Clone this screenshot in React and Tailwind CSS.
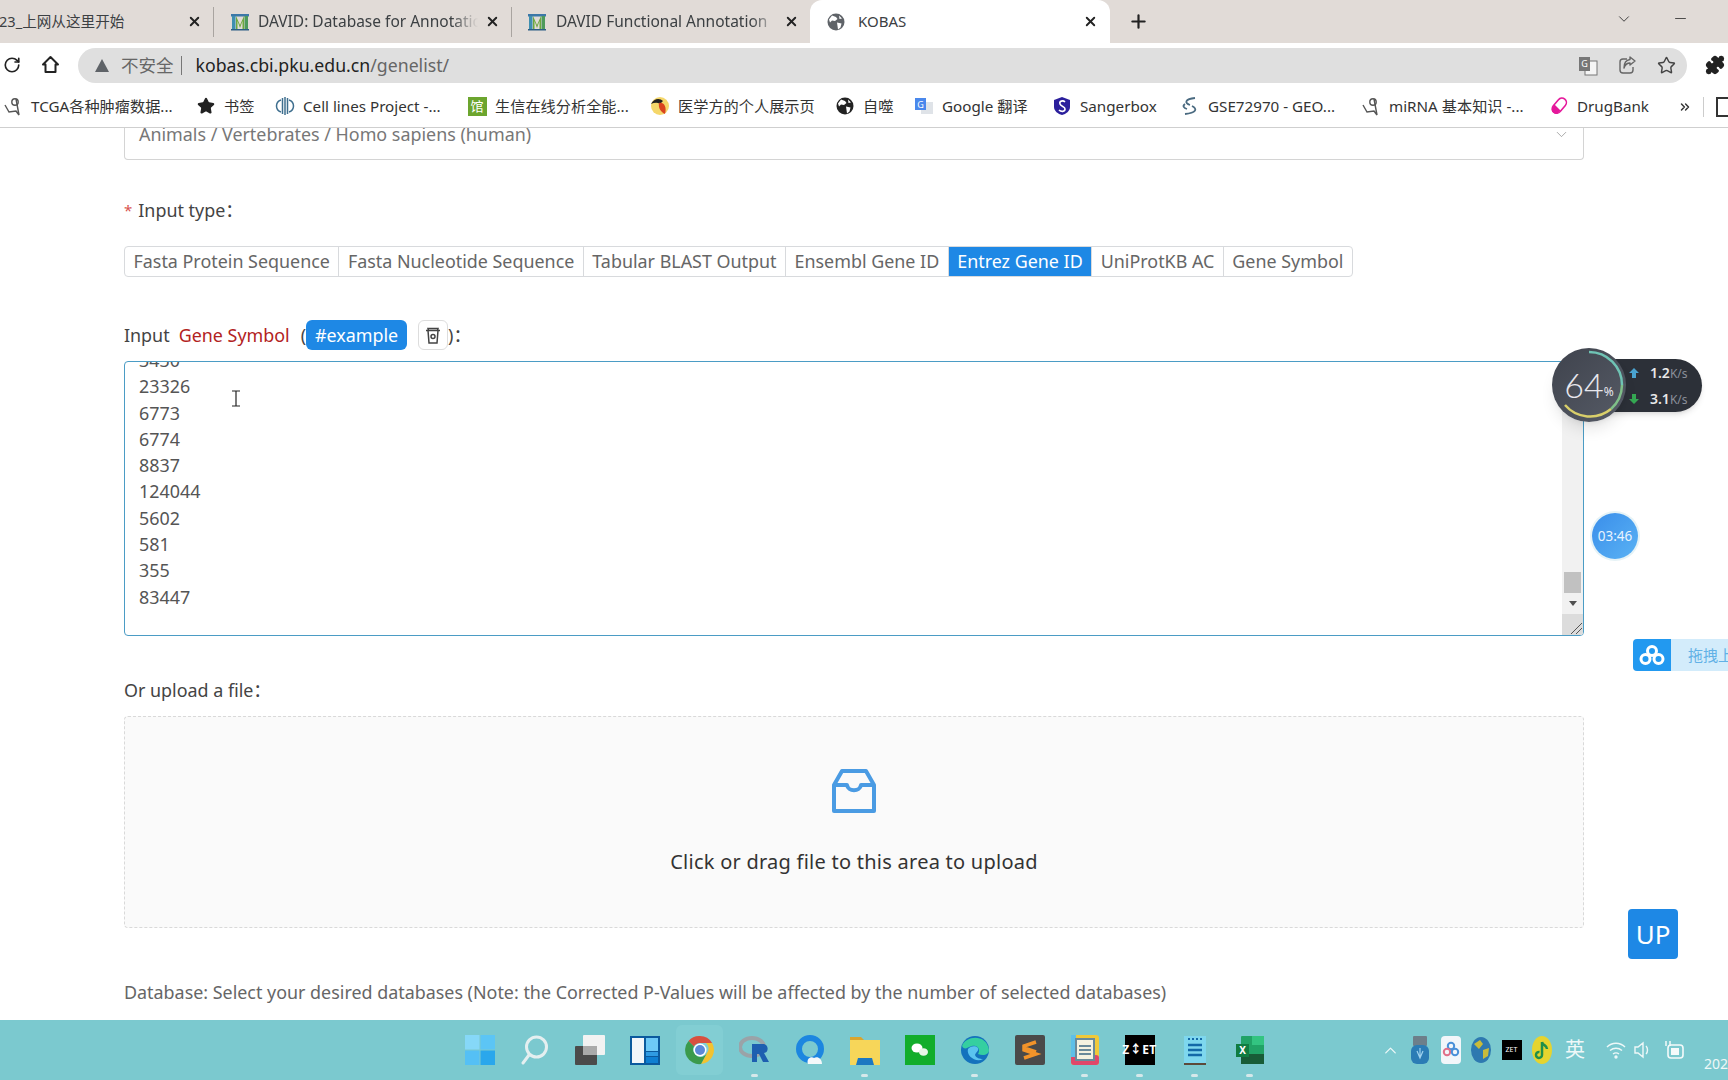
import { RotateCw, Star, Plus, X, ChevronDown, Minus, ChevronUp, Puzzle, ChevronsRight } from "lucide-react";

const uiFont = { fontFamily: '"Noto Sans", "Noto Sans CJK SC", sans-serif' };

const DavidIcon = () => (
    <svg width="20" height="20" viewBox="0 0 20 20" className="shrink-0">
        <rect x="1" y="2" width="18" height="2.5" fill="#3c78a8" />
        <rect x="2" y="4" width="3.5" height="13" fill="#3f8fb0" />
        <rect x="14.5" y="4" width="3.5" height="13" fill="#4d9a5c" />
        <path d="M6 4l4 9 4-9v13h-1.5V9L10 16 7.5 9v8H6z" fill="#6da83f" />
        <rect x="1" y="17" width="18" height="1.5" fill="#2c5f85" />
    </svg>
);

const GlobeIcon = ({ size = 18, color = "#5f6368" }) => (
    <svg width={size} height={size} viewBox="0 0 18 18" className="shrink-0">
        <circle cx="9" cy="9" r="8.5" fill={color} />
        <path d="M5 2.5l4 1.5 1.5 2-2.5 2-3-.5-2 2-1-3zM10 9.5l4.5 1-1 4-2.500 2-.5-3.500zM12 2.500l3 3-2.500.5z" fill="#fff" />
    </svg>
);

const SmallFolded = () => (
    <svg width="20" height="20" viewBox="0 0 20 20" fill="none" stroke="#555" strokeWidth="1.4">
        <path d="M2 9l4 7 7-1 3 4-3-16" />
        <circle cx="12" cy="6" r="3.200" />
    </svg>
);

const Bookmark = ({ w, icon, label }) => (
    <div className={"flex items-center gap-[8px] shrink-0 " + w}>
        <span className="w-[20px] h-[20px] flex items-center justify-center shrink-0">{icon}</span>
        <span className="text-[15.200px] text-[#333] whitespace-nowrap">{label}</span>
    </div>
);

const bookmarks = [
    { w: "w-[193px]", label: "TCGA各种肿瘤数据...", icon: <SmallFolded /> },
    { w: "w-[79px]", label: "书签", icon: <Star size={18} fill="#222" stroke="#222" /> },
    {
        w: "w-[192px]",
        label: "Cell lines Project -...",
        icon: (
            <svg width="20" height="20" viewBox="0 0 20 20" fill="none" stroke="#3f6f8f" strokeWidth="1.5">
                <path d="M6 4c-6 2-6 10 0 12M14 4c6 2 6 10 0 12" />
                <path d="M7.500 2v16M10 1v18M12.500 2v16" />
            </svg>
        ),
    },
    {
        w: "w-[183px]",
        label: "生信在线分析全能...",
        icon: (
            <span className="w-[19px] h-[19px] bg-[#6ca52e] text-white text-[13px] leading-[19px] text-center">馆</span>
        ),
    },
    {
        w: "w-[185px]",
        label: "医学方的个人展示页",
        icon: (
            <svg width="20" height="20" viewBox="0 0 20 20">
                <circle cx="10" cy="10" r="9" fill="#f5d76a" />
                <path d="M1 8c3-6 9-6 12-3l-3 3C7 6 4 7 1 8z" fill="#222" />
                <path d="M9 7c5-1 8 4 6 11-4-2-7-6-6-11z" fill="#d9431e" />
            </svg>
        ),
    },
    { w: "w-[79px]", label: "自噬", icon: <GlobeIcon size={18} color="#222" /> },
    {
        w: "w-[138px]",
        label: "Google 翻译",
        icon: (
            <svg width="20" height="20" viewBox="0 0 20 20">
                <rect x="7" y="6" width="12" height="12" fill="#dfe3e8" />
                <rect x="1" y="2" width="11" height="12" fill="#4a88ec" />
                <text x="6.500" y="11.500" fontSize="9" fill="#fff" textAnchor="middle">G</text>
            </svg>
        ),
    },
    {
        w: "w-[128px]",
        label: "Sangerbox",
        icon: (
            <svg width="20" height="20" viewBox="0 0 20 20">
                <path d="M10 1l8 3v7c0 4-4 7-8 8-4-1-8-4-8-8V4z" fill="#2b1f9c" />
                <path d="M13 6c-2-2-6-1-5 2s5 2 5 5-4 3-6 1" fill="none" stroke="#fff" strokeWidth="1.600" />
            </svg>
        ),
    },
    {
        w: "w-[181px]",
        label: "GSE72970 - GEO...",
        icon: (
            <svg width="20" height="20" viewBox="0 0 20 20" fill="none" stroke="#4a6a80" strokeWidth="1.800">
                <path d="M15 2C5 3 4 7 10 9" />
                <path d="M12 10c6 3 4 7-7 8" />
                <path d="M5 8c-3 2-1 4 2 5" />
            </svg>
        ),
    },
    { w: "w-[188px]", label: "miRNA 基本知识 -...", icon: <SmallFolded /> },
    {
        w: "w-[129px]",
        label: "DrugBank",
        icon: (
            <svg width="20" height="20" viewBox="0 0 20 20">
                <rect x="2" y="5.500" width="17" height="9" rx="4.500" transform="rotate(-50 10 10)" fill="#fff" stroke="#e5189b" strokeWidth="1.600" />
                <path d="M5.500 8.500l6 6-3 3c-3 1.500-7-2-5.500-5.500z" fill="#e5189b" />
            </svg>
        ),
    },
];

const Tab = ({ w, children, sep = true }) => (
    <div className={"flex items-center shrink-0 h-[30px] " + w + (sep ? " border-r border-[#a9a4a0]" : "")}>
        {children}
        <X size={15} strokeWidth={3} className="text-[#222] ml-auto mr-[11px] shrink-0" />
    </div>
);

const fadeText = "text-[15.500px] text-[#3c4043] whitespace-nowrap overflow-hidden [mask-image:linear-gradient(to_right,black_88%,transparent)]";

const types = ["Fasta Protein Sequence", "Fasta Nucleotide Sequence", "Tabular BLAST Output", "Ensembl Gene ID", "Entrez Gene ID", "UniProtKB AC", "Gene Symbol"];

const lines = ["3430", "23326", "6773", "6774", "8837", "124044", "5602", "581", "355", "83447"];

const TaskIcon = ({ children, dot, active }) => (
    <div className="w-[55px] h-[60px] flex flex-col items-center justify-center relative shrink-0">
        {active && <div className="absolute left-[4px] right-[4px] top-[5px] bottom-[5px] rounded-md bg-[#82ced3]" />}
        <div className="relative w-[32px] h-[32px] flex items-center justify-center">{children}</div>
        {dot && <div className="absolute bottom-[3px] w-[7px] h-[3px] rounded-sm bg-[#d5e8ea]" />}
    </div>
);

const taskIcons = [
    {
        node: (
            <svg width="30" height="30" viewBox="0 0 30 30">
                <rect x="0" y="0" width="14.500" height="14.500" fill="#86d8f8" />
                <rect x="15.500" y="0" width="14.500" height="14.500" fill="#5cc5f5" />
                <rect x="0" y="15.500" width="14.500" height="14.500" fill="#55c0f5" />
                <rect x="15.500" y="15.500" width="14.500" height="14.500" fill="#2aa7ec" />
            </svg>
        ),
    },
    {
        node: (
            <svg width="28" height="30" viewBox="0 0 28 30" fill="none" stroke="#e4eff0" strokeWidth="3">
                <circle cx="15.500" cy="12" r="10" />
                <path d="M8 20l-6 8" strokeLinecap="round" />
            </svg>
        ),
    },
    {
        node: (
            <svg width="30" height="30" viewBox="0 0 30 30">
                <rect x="0" y="11" width="22" height="19" rx="1" fill="#4b4b4b" />
                <rect x="8" y="0" width="22" height="20" rx="1" fill="#f2f2f2" />
                <rect x="8" y="11" width="14" height="9" fill="#aaa" />
            </svg>
        ),
    },
    {
        node: (
            <svg width="30" height="30" viewBox="0 0 30 30">
                <rect x="0" y="1" width="30" height="29" fill="#0b5a9e" />
                <rect x="2" y="3" width="12" height="25" fill="#f2f6fa" />
                <rect x="16" y="3" width="12" height="13" fill="#6dc9f7" />
                <rect x="16" y="17" width="12" height="4" fill="#2f9be3" />
                <rect x="16" y="22" width="12" height="6" fill="#0f7fd2" />
            </svg>
        ),
    },
    {
        active: true,
        node: (
            <svg width="30" height="30" viewBox="0 0 30 30">
                <path d="M15 1a14 14 0 0 1 12.100 7H15a7 7 0 0 0-6.100 3.500L3.500 6A14 14 0 0 1 15 1z" fill="#d8503f" />
                <path d="M27.100 8A14 14 0 0 1 16 29l6-11a7 7 0 0 0-1-10z" fill="#f2c230" />
                <path d="M3.500 6A14 14 0 0 0 16 29l6-11a7 7 0 0 1-13-6.500z" fill="#3b9a4c" />
                <circle cx="15" cy="15" r="6.500" fill="#fff" />
                <circle cx="15" cy="15" r="5" fill="#5b88d8" />
            </svg>
        ),
    },
    {
        dot: true,
        node: (
            <svg width="32" height="28" viewBox="0 0 32 28">
                <ellipse cx="13" cy="11" rx="12" ry="9" fill="none" stroke="#9aa3a8" strokeWidth="4" />
                <path d="M13 8h11c6 0 6 9 1 9l5 9h-6l-4-8h-2v8h-5z" fill="#1d5fb0" />
            </svg>
        ),
    },
    {
        node: (
            <svg width="30" height="30" viewBox="0 0 30 30">
                <circle cx="15" cy="14" r="11" fill="none" stroke="#1c86e0" strokeWidth="6" />
                <path d="M13 29c-2-5 3-8 6-6 3-2 8 0 8 6z" fill="#f4f8fa" />
            </svg>
        ),
    },
    {
        dot: true,
        node: (
            <svg width="32" height="30" viewBox="0 0 32 30">
                <path d="M1 2h11l3 3H1z" fill="#d9a52e" />
                <rect x="1" y="5" width="30" height="25" fill="#f7d659" />
                <path d="M7 30l2-7h14l2 7z" fill="#1d78c1" />
            </svg>
        ),
    },
    {
        node: (
            <svg width="30" height="30" viewBox="0 0 30 30">
                <rect width="30" height="30" fill="#12ad2b" />
                <ellipse cx="12" cy="13" rx="5.500" ry="4.500" fill="#fff" />
                <ellipse cx="18.500" cy="17" rx="4.500" ry="3.800" fill="#e8f5e6" />
            </svg>
        ),
    },
    {
        dot: true,
        node: (
            <svg width="30" height="30" viewBox="0 0 30 30">
                <circle cx="15" cy="15" r="14" fill="#1472bd" />
                <path d="M2 11C6 0 27 -1 29 15c0 5-6 6-11 4 3-5-1-9-6-8-5 1-7 5-10 0z" fill="#35cfa0" />
                <path d="M8 14c2-3 8-4 10-1 1 3-2 4-3 7 1 3 5 4 8 4-7 4-17-3-15-10z" fill="#5ac3ef" />
            </svg>
        ),
    },
    {
        node: (
            <svg width="30" height="30" viewBox="0 0 30 30">
                <rect width="30" height="30" rx="2" fill="#4a4a4a" />
                <path d="M21 7L9 11v4l12 4v0l-12 4 M9 13l12 4" fill="none" stroke="#f2932a" strokeWidth="3.500" />
            </svg>
        ),
    },
    {
        dot: true,
        node: (
            <svg width="30" height="30" viewBox="0 0 30 30">
                <rect x="1" y="0" width="28" height="30" rx="3" fill="#f0c93a" />
                <rect x="1" y="20" width="28" height="10" rx="3" fill="#e0486a" />
                <rect x="1" y="0" width="5" height="22" fill="#5ec0e8" />
                <rect x="6" y="4" width="18" height="21" fill="#f5f2e0" stroke="#6a8a9a" strokeWidth="2" />
                <path d="M9 11h12M9 15h12M9 19h12" stroke="#6a8a9a" strokeWidth="2" />
            </svg>
        ),
    },
    {
        dot: true,
        node: (
            <div className="w-[30px] h-[30px] bg-black flex items-center justify-center text-white text-[12px] font-bold leading-none tracking-[0.5px]">
                Z↕ET
            </div>
        ),
    },
    {
        dot: true,
        node: (
            <svg width="24" height="32" viewBox="0 0 24 32">
                <rect x="1" y="2" width="22" height="27" fill="#7ed7ee" />
                <rect x="1" y="29" width="22" height="2" fill="#5c4a3a" />
                <path d="M5 11h14M5 16h14M5 21h14" stroke="#1469a8" strokeWidth="2.500" />
                <path d="M5 5h14" stroke="#1469a8" strokeWidth="2" strokeDasharray="2 2" />
            </svg>
        ),
    },
    {
        dot: true,
        node: (
            <svg width="30" height="30" viewBox="0 0 30 30">
                <rect x="6" y="1" width="23" height="28" rx="1" fill="#21a366" />
                <rect x="17" y="1" width="12" height="9" fill="#33c481" />
                <rect x="6" y="19" width="23" height="10" fill="#185c37" />
                <rect x="1" y="9" width="13" height="13" fill="#107c41" />
                <text x="7.500" y="19" fontSize="10" fontWeight="bold" fill="#fff" textAnchor="middle">X</text>
            </svg>
        ),
    },
];

const App = () => {
    return (
        <div className="relative h-screen w-full flex flex-col overflow-hidden bg-white" style={uiFont}>
            {/* tab strip */}
            <div className="h-[43px] bg-[#e1dbd7] flex items-center shrink-0">
                <Tab w="w-[214px]">
                    <span className="text-[14.600px] text-[#3c4043] whitespace-nowrap -ml-[1px]">23_上网从这里开始</span>
                </Tab>
                <Tab w="w-[298px]">
                    <span className="ml-[16px]"><DavidIcon /></span>
                    <span className={fadeText + " ml-[8px] w-[220px]"}>DAVID: Database for Annotation</span>
                </Tab>
                <Tab w="w-[298px]" sep={false}>
                    <span className="ml-[15px]"><DavidIcon /></span>
                    <span className={fadeText + " ml-[9px] w-[222px]"}>DAVID Functional Annotation</span>
                </Tab>
                <div className="w-[300px] h-[43px] bg-white rounded-t-xl flex items-center shrink-0">
                    <span className="ml-[17px]"><GlobeIcon /></span>
                    <span className="text-[15px] text-[#3c4043] ml-[13px]">KOBAS</span>
                    <X size={15} strokeWidth={3} className="text-[#222] ml-auto mr-[12px]" />
                </div>
                <Plus size={21} strokeWidth={2.5} className="ml-[18px] text-[#222]" />
                <ChevronDown size={18} strokeWidth={1.200} className="ml-auto mr-[39px] -mt-[6px] text-[#333]" />
                <Minus size={17} strokeWidth={1.200} className="mr-[39px] -mt-[6px] text-[#333]" />
            </div>

            {/* address bar */}
            <div className="h-[47px] flex items-start pt-[5px] shrink-0">
                <RotateCw size={18} strokeWidth={2.200} className="ml-[3px] mt-[8px] text-[#222] shrink-0" />
                <svg width="19" height="19" viewBox="0 0 19 19" fill="none" stroke="#222" strokeWidth="2" className="ml-[20px] mt-[7px] shrink-0">
                    <path d="M9.500 2L2 9.500h2.500V17h10V9.500H17z" strokeLinejoin="round" />
                </svg>
                <div className="ml-[18px] w-[1609px] h-[35px] rounded-full bg-[#dfdfdf] flex items-center">
                    <span className="ml-[17px] w-0 h-0 border-l-[7px] border-r-[7px] border-b-[13px] border-l-transparent border-r-transparent border-b-[#5f6368]" />
                    <span className="ml-[12px] text-[17.500px] text-[#666]">不安全</span>
                    <span className="ml-[7px] w-px h-[19px] bg-[#777]" />
                    <span className="ml-[14px] text-[17.700px] text-[#222]">kobas.cbi.pku.edu.cn<span className="text-[#666]">/genelist/</span></span>
                    <span className="ml-auto flex items-center gap-[20px] mr-[11px]">
                        <svg width="20" height="20" viewBox="0 0 20 20">
                            <rect x="7" y="5" width="12" height="14" fill="#f5f5f5" stroke="#777" />
                            <rect x="1" y="1" width="11" height="14" fill="#777" />
                            <text x="6.500" y="11" fontSize="9" fill="#fff" textAnchor="middle">G</text>
                        </svg>
                        <svg width="19" height="19" viewBox="0 0 19 19" fill="none" stroke="#666" strokeWidth="1.400">
                            <path d="M9 3H5a3 3 0 0 0-3 3v8a3 3 0 0 0 3 3h7a3 3 0 0 0 3-3v-3" />
                            <path d="M12 1l5 4-5 4V7C9 7 7 9 6 12c0-5 2-8 6-8.500z" strokeLinejoin="round" />
                        </svg>
                        <Star size={19} strokeWidth={1.800} className="text-[#444]" />
                    </span>
                </div>
                <Puzzle size={20} fill="#222" stroke="#222" className="ml-[18px] mt-[7px] shrink-0" />
            </div>

            {/* bookmarks */}
            <div className="h-[38px] border-b border-[#cfcfcf] flex items-center shrink-0 pl-[3px] pb-[4px] overflow-hidden">
                {bookmarks.map((b) => (
                    <Bookmark key={b.label} w={b.w} icon={b.icon} label={b.label} />
                ))}
                <ChevronsRight size={14} strokeWidth={2.5} className="text-[#333] shrink-0" />
                <span className="ml-[11px] w-px h-[20px] bg-[#ccc] shrink-0" />
                <span className="ml-[12px] w-[14px] h-[20px] border-2 border-[#333] shrink-0" />
            </div>

            {/* page */}
            <div className="flex-1 min-h-0 overflow-hidden pl-[124px] pr-[144px] text-[17.900px] text-[#606266]">
                <div className="h-[32px] border-x border-b border-[#d4d4d4] rounded-b flex items-center justify-between pl-[14px] pr-[13px]">
                    <span className="leading-[12px] text-[#777] -mt-[19px]">Animals / Vertebrates / Homo sapiens (human)</span>
                    <ChevronDown size={17} strokeWidth={1} className="text-[#888] -mt-[19px]" />
                </div>

                <div className="mt-[36px] h-[28px] flex items-center text-[#444]">
                    <span className="text-[#d9534f] text-[15px] mr-[6px]">*</span>
                    Input type：
                </div>

                <div className="mt-[22px] h-[31px] inline-flex border border-[#d8dadd] rounded align-top overflow-hidden">
                    {types.map((t, i) => (
                        <div
                            key={t}
                            className={
                                "px-[8.500px] flex items-center whitespace-nowrap " +
                                (i === 4 ? "bg-[#1e88e5] text-white" : "text-[#666]") +
                                (i > 0 ? " border-l border-[#d8dadd]" : "")
                            }
                        >
                            {t}
                        </div>
                    ))}
                </div>

                <div className="mt-[43px] h-[30px] flex items-center text-[#444]">
                    <span>Input</span>
                    <span className="ml-[9px] text-[#b22222]">Gene Symbol</span>
                    <span className="ml-[11px]">(</span>
                    <span className="w-[101px] h-[30px] bg-[#1e88e5] text-white rounded-md flex items-center justify-center">#example</span>
                    <span className="ml-[11px] w-[30px] h-[30px] border border-[#ddd] rounded-md flex items-center justify-center">
                        <svg width="16" height="18" viewBox="0 0 16 18" fill="none" stroke="#444" strokeWidth="1.500">
                            <path d="M1 4.500h14M3.500 4.500L3 2.500h10l-.5 2M3 4.500L4 17h8l1-12.500" />
                            <circle cx="8" cy="10.500" r="2" />
                        </svg>
                    </span>
                    <span>)：</span>
                </div>

                <div className="mt-[11px] h-[275px] border border-[#4b9cc5] rounded flex overflow-hidden">
                    <div className="flex-1 overflow-hidden pl-[14px] -mt-[15px] text-[17.900px] leading-[26.300px] text-[#555]">
                        {lines.map((l) => (
                            <div key={l}>{l}</div>
                        ))}
                    </div>
                    <div className="w-[21px] flex flex-col bg-[#f1f1f1] shrink-0">
                        <div className="flex-1" />
                        <div className="mx-[2px] h-[21px] bg-[#c1c1c1]" />
                        <div className="h-[21px] flex items-center justify-center">
                            <span className="w-0 h-0 border-l-[4px] border-r-[4px] border-t-[5px] border-l-transparent border-r-transparent border-t-[#505050]" />
                        </div>
                        <div className="h-[21px] bg-[#dcdcdc] flex items-end justify-end overflow-hidden">
                            <svg width="14" height="14" viewBox="0 0 14 14" stroke="#555" strokeWidth="1">
                                <path d="M2 13L13 2M7 13l6-6" />
                            </svg>
                        </div>
                    </div>
                </div>

                <div className="mt-[40px] h-[28px] flex items-center text-[#444]">Or upload a file：</div>

                <div className="mt-[12px] h-[212px] border border-dashed border-[#d9d9d9] rounded bg-[#fafafa] flex flex-col items-center">
                    <svg width="46" height="46" viewBox="0 0 46 46" fill="none" stroke="#4a9be3" strokeWidth="4" strokeLinejoin="round" className="mt-[51px]">
                        <path d="M11 3h24l8 14v26H3V17z" />
                        <path d="M3 17h13c1 7 13 7 14 0h13" />
                    </svg>
                    <div className="mt-[33px] text-[20px] text-[#333] tracking-[0.25px]">Click or drag file to this area to upload</div>
                </div>

                <div className="mt-[50px] h-[28px] flex items-center text-[#666]">
                    Database: Select your desired databases (Note: the Corrected P-Values will be affected by the number of selected databases)
                </div>
            </div>

            {/* taskbar */}
            <div className="h-[60px] shrink-0 bg-[#7bc9cf] flex items-center pl-[452px] overflow-hidden">
                {taskIcons.map((t, i) => (
                    <TaskIcon key={i} dot={t.dot} active={t.active}>{t.node}</TaskIcon>
                ))}
                <ChevronUp size={19} strokeWidth={1.600} className="ml-[104px] text-[#eef8f8] shrink-0" />
                <div className="ml-[10px] flex items-center gap-[10.500px] shrink-0">
                    <svg width="20" height="28" viewBox="0 0 20 28">
                        <rect x="3" y="0" width="14" height="10" rx="1" fill="#6d7f8a" />
                        <rect x="1" y="9" width="18" height="19" rx="6" fill="#2b7cb5" />
                        <path d="M10 12v10M7 15l3 7 3-7" fill="none" stroke="#9fd2ee" strokeWidth="1.200" />
                    </svg>
                    <svg width="20" height="28" viewBox="0 0 20 28">
                        <rect width="20" height="28" rx="4" fill="#f2f6fa" />
                        <circle cx="10" cy="10" r="3.200" fill="none" stroke="#4a90d9" strokeWidth="2" />
                        <circle cx="6" cy="16" r="3.200" fill="none" stroke="#e0708a" strokeWidth="2" />
                        <circle cx="14" cy="16" r="3.200" fill="none" stroke="#4a90d9" strokeWidth="2" />
                    </svg>
                    <svg width="20" height="28" viewBox="0 0 20 28">
                        <ellipse cx="10" cy="14" rx="10" ry="13" fill="#2e79b0" />
                        <path d="M3 8l6-4 3 4-4 5zM12 14l6-2-1 8-5 3z" fill="#c9bb3a" />
                    </svg>
                    <span className="w-[20px] h-[20px] bg-black text-white text-[7px] leading-[20px] text-center">ZET</span>
                    <svg width="20" height="28" viewBox="0 0 20 28">
                        <ellipse cx="10" cy="14" rx="10" ry="14" fill="#e6d42f" />
                        <path d="M10 6v13a3 3 0 1 1-2.500-3M10 6c1 4 5 3 5 7" fill="none" stroke="#1f8f4a" strokeWidth="2.500" />
                    </svg>
                </div>
                <span className="ml-[13px] text-[20px] text-[#eef8f8] shrink-0">英</span>
                <div className="ml-[21px] flex items-center gap-[7px] text-[#eef8f8] shrink-0">
                    <svg width="20" height="18" viewBox="0 0 20 18" fill="none" stroke="currentColor" strokeWidth="1.400">
                        <path d="M1 6c5-5 13-5 18 0M4 9.500c3.500-3 8.500-3 12 0M7 13c2-1.500 4-1.500 6 0" />
                        <circle cx="10" cy="16" r="1" fill="currentColor" />
                    </svg>
                    <svg width="20" height="18" viewBox="0 0 20 18" fill="none" stroke="currentColor" strokeWidth="1.400">
                        <path d="M2 6h3l5-4v14l-5-4H2zM13 5c2 2 2 6 0 8" />
                    </svg>
                    <svg width="22" height="20" viewBox="0 0 22 20" className="ml-[3px]">
                        <rect x="5" y="5" width="15" height="13" rx="3" fill="none" stroke="#f4fafa" strokeWidth="1.600" />
                        <rect x="8" y="8" width="8" height="7" fill="#f4fafa" />
                        <path d="M3 1v5M7 1v5" stroke="#f4fafa" strokeWidth="1.500" />
                    </svg>
                </div>
                <span className="ml-[19px] text-[14px] text-[#eef8f8] mt-[27px] shrink-0">202</span>
            </div>

            {/* text cursor over the textarea */}
            <svg width="10" height="17" viewBox="0 0 10 17" fill="none" stroke="#222" strokeWidth="1.200" className="absolute left-[231px] top-[390px]">
                <path d="M1 1h8M5 1v15M1 16h8" />
            </svg>

            {/* floating: network meter */}
            <div className="absolute left-[1589px] top-[359px] w-[113px] h-[53px] rounded-r-full bg-[#2c3038] shadow-md flex flex-col justify-center pl-[40px] gap-[12px] text-[14px] font-semibold text-[#e8e8e8] leading-none">
                <div className="flex items-center gap-[11px]">
                    <svg width="10" height="10" viewBox="0 0 10 10" fill="#4aa3d0"><path d="M5 0l5 5H7v5H3V5H0z" /></svg>
                    <span>1.2<span className="text-[#8a8f98] font-normal text-[12px]">K/s</span></span>
                </div>
                <div className="flex items-center gap-[11px]">
                    <svg width="10" height="10" viewBox="0 0 10 10" fill="#35a853"><path d="M5 10l5-5H7V0H3v5H0z" /></svg>
                    <span>3.1<span className="text-[#8a8f98] font-normal text-[12px]">K/s</span></span>
                </div>
            </div>
            <div className="absolute left-[1552px] top-[348px] w-[74px] h-[74px] rounded-full bg-linear-to-br from-[#3f434d] to-[#565b66] shadow-lg flex items-center justify-center text-[#e8e8ee]">
                <svg width="74" height="74" viewBox="0 0 74 74" fill="none" strokeWidth="2.500" className="absolute inset-0">
                    <path d="M37 4a33 33 0 0 1 33 33" stroke="#6fc3b4" />
                    <path d="M70 37a33 33 0 0 1-11 24" stroke="#7fbf88" />
                    <path d="M59 61a33 33 0 0 1-46 -4" stroke="#d9cf6a" />
                </svg>
                <span className="text-[34px] font-light leading-none" style={{ fontFamily: "Lato, sans-serif" }}>64</span>
                <span className="text-[12px] mt-[13px]">%</span>
            </div>

            {/* floating: timer */}
            <div className="absolute left-[1592px] top-[513px] w-[46px] h-[46px] rounded-full bg-linear-to-br from-[#3a8eea] to-[#5ab2f4] ring-2 ring-[#e6f3f6] flex items-center justify-center text-[13.500px] text-[#e8f4ff]">
                03:46
            </div>

            {/* floating: baidu drag upload */}
            <div className="absolute left-[1633px] top-[639px] h-[32px] w-[95px] flex rounded-l overflow-hidden">
                <div className="w-[38px] bg-[#2299f0] flex items-center justify-center">
                    <svg width="26" height="22" viewBox="0 0 26 22" fill="none" stroke="#fff" strokeWidth="3">
                        <circle cx="13" cy="7" r="4.500" />
                        <circle cx="6.500" cy="15" r="4.500" />
                        <circle cx="19.500" cy="15" r="4.500" />
                    </svg>
                </div>
                <div className="flex-1 bg-[#d3ecfb] pl-[17px] text-[15px] leading-[32px] text-[#62b1e6] whitespace-nowrap overflow-hidden">拖拽上传</div>
            </div>

            {/* floating: back to top */}
            <div className="absolute left-[1628px] top-[909px] w-[50px] h-[50px] rounded bg-[#1e88e5] text-white text-[26px] flex items-center justify-center">
                UP
            </div>
        </div>
    );
};

export default App;
